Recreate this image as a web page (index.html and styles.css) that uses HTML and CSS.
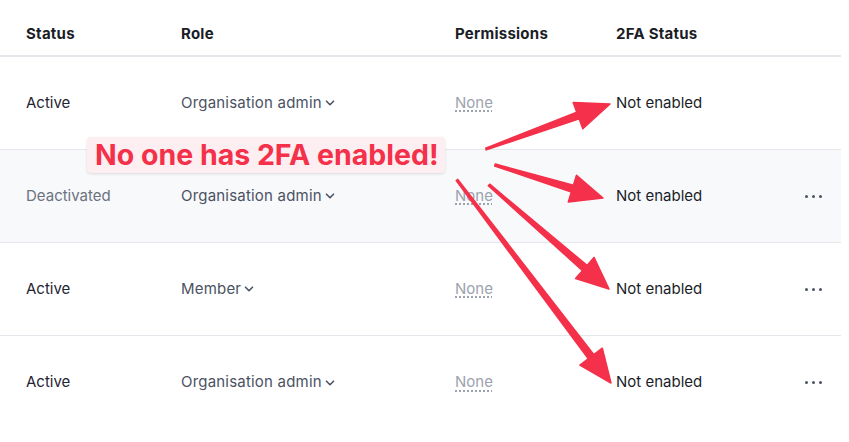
FILE: index.html
```html
<!DOCTYPE html>
<html>
<head>
<meta charset="utf-8">
<link rel="stylesheet" href="styles.css">
</head>
<body>
<div class="page">
  <div class="table">
    <div class="row head">
      <div class="c status">Status</div>
      <div class="c">Role</div>
      <div class="c">Permissions</div>
      <div class="c">2FA Status</div>
      <div class="c"></div>
    </div>
    <div class="row">
      <div class="c status">Active</div>
      <div class="c role"><span class="dd">Organisation admin<svg class="chev" viewBox="0 0 10 6" width="10" height="6"><path d="M1.5 1.2l3.5 3.5 3.5-3.5"/></svg></span></div>
      <div class="c perm"><span class="none">None</span></div>
      <div class="c tfa">Not enabled</div>
      <div class="c more"></div>
    </div>
    <div class="row alt">
      <div class="c status muted">Deactivated</div>
      <div class="c role"><span class="dd">Organisation admin<svg class="chev" viewBox="0 0 10 6" width="10" height="6"><path d="M1.5 1.2l3.5 3.5 3.5-3.5"/></svg></span></div>
      <div class="c perm"><span class="none">None</span></div>
      <div class="c tfa">Not enabled</div>
      <div class="c more"><span class="dots"><i></i><i></i><i></i></span></div>
    </div>
    <div class="row">
      <div class="c status">Active</div>
      <div class="c role"><span class="dd">Member<svg class="chev" viewBox="0 0 10 6" width="10" height="6"><path d="M1.5 1.2l3.5 3.5 3.5-3.5"/></svg></span></div>
      <div class="c perm"><span class="none">None</span></div>
      <div class="c tfa">Not enabled</div>
      <div class="c more"><span class="dots"><i></i><i></i><i></i></span></div>
    </div>
    <div class="row last">
      <div class="c status">Active</div>
      <div class="c role"><span class="dd">Organisation admin<svg class="chev" viewBox="0 0 10 6" width="10" height="6"><path d="M1.5 1.2l3.5 3.5 3.5-3.5"/></svg></span></div>
      <div class="c perm"><span class="none">None</span></div>
      <div class="c tfa">Not enabled</div>
      <div class="c more"><span class="dots"><i></i><i></i><i></i></span></div>
    </div>
  </div>

  <svg class="arrows" viewBox="0 0 849 442" width="849" height="442">
    <g fill="#f4304a" stroke="#f4304a" stroke-width="1.5" stroke-linejoin="round">
      <polygon points="486.3,149.9 485.7,148.1 576.8,112.3 579.2,118.9"/>
      <polygon points="610,104 573.2,102.4 582.8,128.8"/>
      <polygon points="494.7,166.0 495.3,164.0 573.4,185.3 571.4,192.0"/>
      <polygon points="603,198 576.5,175.2 568.3,202.0"/>
      <polygon points="488.3,185.8 489.7,184.2 587.1,265.4 582.5,270.6"/>
      <polygon points="609,289 594.0,257.4 575.6,278.6"/>
      <polygon points="456.2,180.6 457.8,179.4 593.9,354.6 588.3,358.8"/>
      <polygon points="611,383 602.3,348.2 579.9,365.2"/>
    </g>
  </svg>

  <div class="callout">No one has 2FA enabled!</div>
</div>
</body>
</html>
```

FILE: styles.css
```css
* { box-sizing: border-box; }
html, body { margin: 0; padding: 0; background: #ffffff; }
body {
  font-family: Inter, "Noto Sans", "Liberation Sans", sans-serif;
  font-size: 15px;
  color: #1f2533;
}
.page {
  position: relative;
  width: 849px;
  height: 442px;
  overflow: hidden;
}
.table {
  width: 841px;
}
.row {
  display: grid;
  grid-template-columns: 181px 274px 161px 1fr 36px;
  align-items: center;
  height: 93px;
  padding-bottom: 2px;
  border-bottom: 1px solid #e6e7ec;
}
.row.head {
  height: 57px;
  padding-top: 11px;
  padding-bottom: 0;
  border-bottom: 2px solid #e6e6ec;
  font-weight: 700;
  color: #1a1d26;
  letter-spacing: 0.25px;
}
.row.alt { background: #f8f9fb; }
.row.last { border-bottom: none; }
.c.status { padding-left: 26px; }
.muted { color: #6b7280; }
.role { color: #4b5263; letter-spacing: 0.2px; }
.dd { display: inline-flex; align-items: center; gap: 3px; }
.chev { fill: none; stroke: #4b5263; stroke-width: 1.6; stroke-linecap: round; stroke-linejoin: round; margin-top: 2px; }
.none {
  color: #9ca3af;
  text-decoration: underline dotted #9ca3af;
  text-decoration-thickness: 1.5px;
  text-underline-offset: 3px;
}
.tfa { color: #1a1e2a; }
.more { display: flex; }
.dots { display: inline-flex; gap: 4px; margin-top: 2px; }
.dots i { width: 3px; height: 3px; border-radius: 50%; background: #4b5263; display: block; }
.arrows { position: absolute; left: 0; top: 0; }
.callout {
  position: absolute;
  left: 87px;
  top: 137px;
  width: 358px;
  height: 36px;
  background: #fdeff1;
  border-radius: 4px;
  box-shadow: 0 1px 3px rgba(0,0,0,0.12);
  color: #f4304a;
  font-weight: 700;
  font-size: 28.5px;
  line-height: 35px;
  padding-left: 8px;
  white-space: nowrap;
}
```
